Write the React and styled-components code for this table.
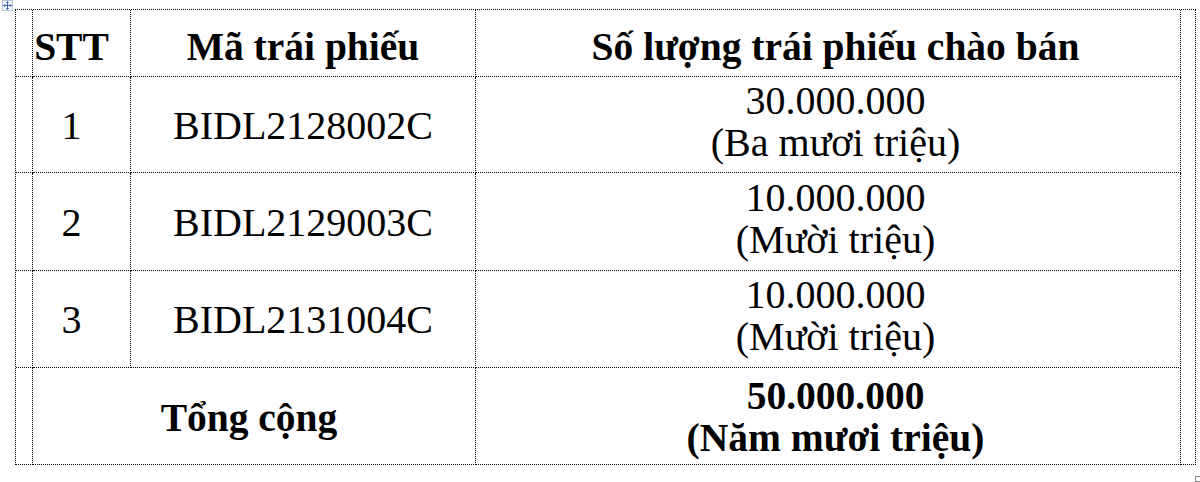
import React from "react";
import styled, { createGlobalStyle } from "styled-components";

const Global = createGlobalStyle`
  html, body { margin: 0; padding: 0; background: #fff; }
  body { font-family: "Liberation Serif", "Times New Roman", serif; color: #000; }
`;

const Page = styled.div`
  position: relative;
  width: 1200px;
  height: 482px;
  padding: 9px 0 0 15px;
  box-sizing: border-box;
`;

const Grid = styled.div`
  display: grid;
  width: 1180px;
  grid-template-columns: 17px 98px 345px 705px 15px;
  grid-template-rows: 67px 96px 98px 97px 97px;
  border-top: 1px dotted #000;
  border-left: 1px dotted #000;
`;

const Cell = styled.div`
  box-sizing: border-box;
  border-right: 1px dotted #000;
  border-bottom: 1px dotted #000;
  display: flex;
  flex-direction: column;
  align-items: center;
  justify-content: center;
  font-size: ${(p) => (p.$bold ? "39.5px" : "40px")};
  line-height: 42px;
  font-weight: ${(p) => (p.$bold ? 700 : 400)};
  padding-left: ${(p) => p.$pl || 0}px;
  padding-right: ${(p) => p.$pr || 0}px;
  padding-top: ${(p) => p.$pt || 0}px;
  padding-bottom: ${(p) => p.$pb || 0}px;
  white-space: nowrap;
  grid-column: ${(p) => p.$col || "auto"};
  grid-row: ${(p) => p.$row || "auto"};
`;

const Gutter = styled.div`
  box-sizing: border-box;
  border-right: 1px dotted #000;
  border-bottom: 1px dotted #000;
  grid-column: ${(p) => p.$col || "auto"};
  grid-row: ${(p) => p.$row || "auto"};
`;

const MoveHandle = styled.div`
  position: absolute;
  left: 2px;
  top: 0;
  width: 11px;
  height: 11px;
  box-sizing: border-box;
  border: 1px solid #b8c4d4;
  background: #f4f7fb;
  display: flex;
  align-items: center;
  justify-content: center;
`;

const ResizeHandle = styled.div`
  position: absolute;
  left: 1195px;
  top: 476px;
  width: 6px;
  height: 6px;
  box-sizing: border-box;
  border: 1px solid #8a8a8a;
  background: #fff;
`;

const rows = [
  { n: "1", code: "BIDL2128002C", qty: "30.000.000", words: "(Ba mươi triệu)" },
  { n: "2", code: "BIDL2129003C", qty: "10.000.000", words: "(Mười triệu)" },
  { n: "3", code: "BIDL2131004C", qty: "10.000.000", words: "(Mười triệu)" },
];

export default function App() {
  return (
    <>
      <Global />
      <Page>
        <MoveHandle>
          <svg width="9" height="9" viewBox="0 0 9 9">
            <path
              d="M4.5 0.5 L4.5 8.5 M0.5 4.5 L8.5 4.5 M3.3 1.7 L4.5 0.5 L5.7 1.7 M3.3 7.3 L4.5 8.5 L5.7 7.3 M1.7 3.3 L0.5 4.5 L1.7 5.7 M7.3 3.3 L8.5 4.5 L7.3 5.7"
              stroke="#3a64a8"
              strokeWidth="1"
              fill="none"
            />
          </svg>
        </MoveHandle>
        <Grid>
          <Gutter $row="1" $col="1" />
          <Cell $bold $pr={20} $pt={7}>STT</Cell>
          <Cell $bold $pt={7}>Mã trái phiếu</Cell>
          <Cell $bold $pl={15} $pt={7}>Số lượng trái phiếu chào bán</Cell>
          <Gutter $col="5" $row="1 / 6" />
          {rows.map((r) => (
            <React.Fragment key={r.n}>
              <Gutter />
              <Cell $pr={20} $pt={2}>{r.n}</Cell>
              <Cell $pt={2}>{r.code}</Cell>
              <Cell $pl={15} $pb={6}>
                <span>{r.qty}</span>
                <span>{r.words}</span>
              </Cell>
            </React.Fragment>
          ))}
          <Gutter />
          <Cell $bold $col="2 / 4" $pr={10} $pt={4}>Tổng cộng</Cell>
          <Cell $bold $pl={15} $pt={2}>
            <span>50.000.000</span>
            <span>(Năm mươi triệu)</span>
          </Cell>
        </Grid>
        <ResizeHandle />
      </Page>
    </>
  );
}
